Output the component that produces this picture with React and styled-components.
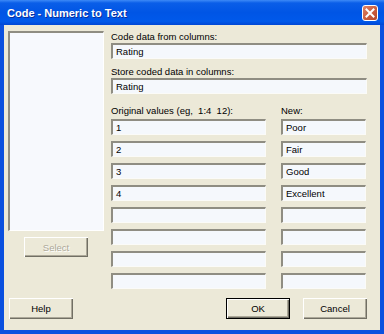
import React from 'react'
import styled, { createGlobalStyle } from 'styled-components'

const GlobalStyle = createGlobalStyle`
  html, body {
    margin: 0;
    padding: 0;
    background: #ffffff;
  }
  * {
    box-sizing: border-box;
  }
`

const Window = styled.div`
  width: 384px;
  height: 334px;
  display: flex;
  flex-direction: column;
  background: #0a50df;
  font-family: "Liberation Sans", Arial, sans-serif;
  overflow: hidden;
`

const TitleBar = styled.div`
  height: 25px;
  flex: none;
  display: flex;
  align-items: center;
  justify-content: space-between;
  padding: 0 6px 0 7px;
  background: linear-gradient(to bottom, #3d8af7 0%, #0a5ee8 12%, #0055e5 50%, #0059ea 85%, #0047d4 100%);
`

const Title = styled.span`
  color: #ffffff;
  font-weight: bold;
  font-size: 11px;
  text-shadow: 1px 1px 0 #0a2e9c;
`

const CloseButton = styled.div`
  width: 16px;
  height: 16px;
  border: 1px solid #ffffff;
  border-radius: 3px;
  background: linear-gradient(135deg, #e08466 0%, #c85a3c 60%, #b0482c 100%);
  display: flex;
  align-items: center;
  justify-content: center;
`

const Body = styled.div`
  flex: 1;
  margin: 0 4px 4px 4px;
  background: #ece9d8;
  padding: 5px 13px 0 4px;
  display: flex;
  flex-direction: column;
`

const Main = styled.div`
  display: flex;
  height: 259px;
`

const LeftColumn = styled.div`
  width: 96px;
  flex: none;
  display: flex;
  flex-direction: column;
`

const ListBox = styled.div`
  margin-top: 1px;
  height: 200px;
  background: #f7f9fd;
  border-top: 2px solid #8f8d82;
  border-left: 2px solid #8f8d82;
  border-right: 1px solid #ffffff;
  border-bottom: 1px solid #ffffff;
`

const Button = styled.button`
  width: ${p => p.$w || 64}px;
  height: ${p => p.$h || 21}px;
  padding: 0;
  background: #ece9d8;
  font-family: "Liberation Sans", Arial, sans-serif;
  font-size: 9.5px;
  color: ${p => (p.disabled ? '#aca899' : '#000000')};
  text-shadow: ${p => (p.disabled ? '1px 1px 0 #ffffff' : 'none')};
  border: ${p => (p.$default ? '1px solid #000000' : 'none')};
  box-shadow: inset 1px 1px 0 #ffffff, inset -1px -1px 0 #716f64, inset -2px -2px 0 #aca899;
`

const SelectButton = styled(Button)`
  margin: 6px 0 0 16px;
`

const RightColumn = styled.div`
  margin-left: 7px;
  flex: 1;
  display: flex;
  flex-direction: column;
`

const Label = styled.div`
  height: 13px;
  line-height: 13px;
  font-size: 9.5px;
  color: #000000;
  white-space: pre;
  margin-top: ${p => p.$top || 0}px;
`

const Field = styled.div`
  height: 16px;
  width: ${p => (p.$w ? `${p.$w}px` : '100%')};
  background: #f5f8fc;
  border-top: 2px solid #8f8d82;
  border-left: 2px solid #8f8d82;
  border-right: 1px solid #fbfbf8;
  border-bottom: 1px solid #fbfbf8;
  font-size: 9.5px;
  line-height: 13px;
  padding-left: 3px;
  color: #000000;
  white-space: pre;
`

const Grid = styled.div`
  display: grid;
  grid-template-columns: 155px 85px;
  column-gap: 15px;
  row-gap: 6px;
`

const GridHead = styled(Grid)`
  margin-top: 10px;
  margin-bottom: 2px;
  row-gap: 0;
`

const Footer = styled.div`
  margin-top: 9px;
  display: flex;
  align-items: center;
  padding-left: 1px;
`

const Spacer = styled.div`
  flex: 1;
`

const FooterRight = styled.div`
  display: flex;
  gap: 13px;
`

const rows = [
  ['1', 'Poor'],
  ['2', 'Fair'],
  ['3', 'Good'],
  ['4', 'Excellent'],
  ['', ''],
  ['', ''],
  ['', ''],
  ['', ''],
]

export default function App() {
  return (
    <>
      <GlobalStyle />
      <Window>
        <TitleBar>
          <Title>Code - Numeric to Text</Title>
          <CloseButton>
            <svg width="10" height="10" viewBox="0 0 10 10">
              <path d="M1.5 1.5 L8.5 8.5 M8.5 1.5 L1.5 8.5" stroke="#ffffff" strokeWidth="2" strokeLinecap="square" />
            </svg>
          </CloseButton>
        </TitleBar>
        <Body>
          <Main>
            <LeftColumn>
              <ListBox />
              <SelectButton disabled $h={20}>Select</SelectButton>
            </LeftColumn>
            <RightColumn>
              <Label>Code data from columns:</Label>
              <Field>Rating</Field>
              <Label $top={6}>Store coded data in columns:</Label>
              <Field>Rating</Field>
              <GridHead>
                <Label>Original values (eg,  1:4  12):</Label>
                <Label>New:</Label>
              </GridHead>
              <Grid>
                {rows.map(([orig, val], i) => (
                  <React.Fragment key={i}>
                    <Field>{orig}</Field>
                    <Field>{val}</Field>
                  </React.Fragment>
                ))}
              </Grid>
            </RightColumn>
          </Main>
          <Footer>
            <Button>Help</Button>
            <Spacer />
            <FooterRight>
              <Button $default>OK</Button>
              <Button>Cancel</Button>
            </FooterRight>
          </Footer>
        </Body>
      </Window>
    </>
  )
}
